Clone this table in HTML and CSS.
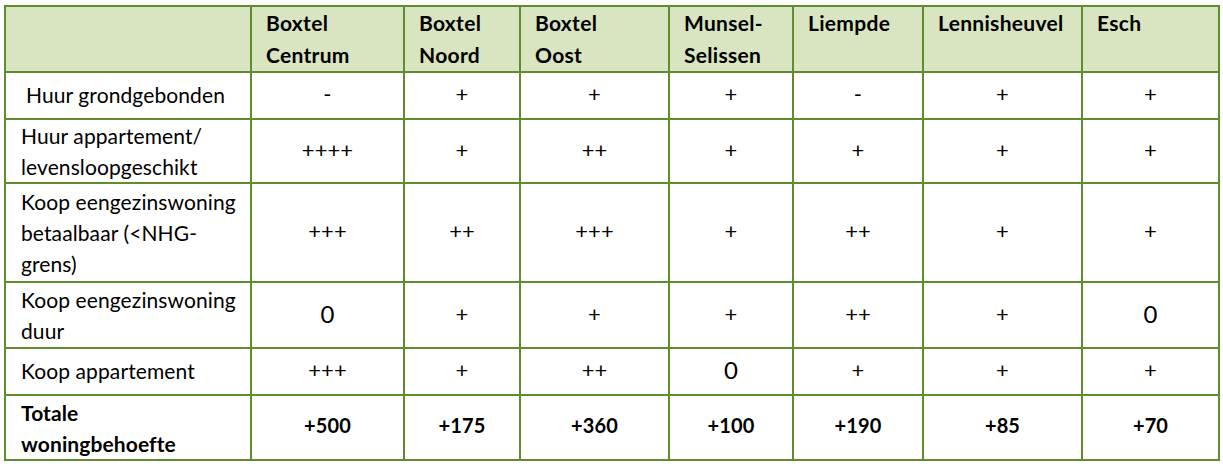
FILE: index.html
```html
<!DOCTYPE html>
<html lang="nl">
<head>
<meta charset="utf-8">
<title>Woningbehoefte</title>
<link rel="stylesheet" href="styles.css">
</head>
<body>
<table class="grid">
  <colgroup>
    <col class="c0"><col class="c1"><col class="c2"><col class="c3"><col class="c4"><col class="c5"><col class="c6"><col class="c7">
  </colgroup>
  <thead>
    <tr class="r-head">
      <th></th>
      <th>Boxtel<br>Centrum</th>
      <th>Boxtel<br>Noord</th>
      <th>Boxtel<br>Oost</th>
      <th>Munsel-<br>Selissen</th>
      <th>Liempde</th>
      <th>Lennisheuvel</th>
      <th>Esch</th>
    </tr>
  </thead>
  <tbody>
    <tr class="r-short">
      <td class="label single indent">Huur grondgebonden</td>
      <td>-</td><td>+</td><td>+</td><td>+</td><td>-</td><td>+</td><td>+</td>
    </tr>
    <tr class="r-two">
      <td class="label">Huur appartement/<br>levensloopgeschikt</td>
      <td>++++</td><td>+</td><td>++</td><td>+</td><td>+</td><td>+</td><td>+</td>
    </tr>
    <tr class="r-three">
      <td class="label">Koop eengezinswoning<br>betaalbaar (&lt;NHG-<br>grens)</td>
      <td>+++</td><td>++</td><td>+++</td><td>+</td><td>++</td><td>+</td><td>+</td>
    </tr>
    <tr class="r-tall">
      <td class="label">Koop eengezinswoning<br>duur</td>
      <td class="big">0</td><td>+</td><td>+</td><td>+</td><td>++</td><td>+</td><td class="big">0</td>
    </tr>
    <tr class="r-short">
      <td class="label single">Koop appartement</td>
      <td>+++</td><td>+</td><td>++</td><td class="big">0</td><td>+</td><td>+</td><td>+</td>
    </tr>
    <tr class="r-total">
      <td class="label">Totale<br>woningbehoefte</td>
      <td>+500</td><td>+175</td><td>+360</td><td>+100</td><td>+190</td><td>+85</td><td>+70</td>
    </tr>
  </tbody>
</table>
</body>
</html>
```
FILE: styles.css
```css
html, body {
  margin: 0;
  padding: 0;
  background: #ffffff;
}

body {
  font-family: Lato, "Liberation Sans", sans-serif;
  font-size: 21px;
  letter-spacing: 0.1px;
  color: #000000;
}

.grid {
  margin: 5px 0 0 4px;
  border-collapse: separate;
  border-spacing: 0;
  table-layout: fixed;
  width: 1216px;
  border-left: 2px solid #5f8c2d;
  border-top: 2px solid #5f8c2d;
}

.c0 { width: 246px; }
.c1 { width: 153px; }
.c2 { width: 116px; }
.c3 { width: 149px; }
.c4 { width: 124px; }
.c5 { width: 130px; }
.c6 { width: 159px; }
.c7 { width: 137px; }

.grid th,
.grid td {
  border-right: 2px solid #5f8c2d;
  border-bottom: 2px solid #5f8c2d;
  padding: 0;
  line-height: 31.5px;
  box-sizing: border-box;
}

.grid th {
  background: #d8e5c0;
  text-align: left;
  vertical-align: top;
  font-weight: bold;
  padding-left: 14px;
  letter-spacing: 0.3px;
  white-space: nowrap;
}

.grid td {
  text-align: center;
  vertical-align: middle;
  padding-bottom: 3px;
  font-size: 22px;
}

.grid td.label {
  text-align: left;
  padding-left: 15px;
  padding-bottom: 0;
  line-height: 31px;
  font-size: 21px;
  white-space: nowrap;
}

.grid td.label.single {
  padding-bottom: 3px;
}

.grid td.indent {
  padding-left: 20px;
}

.grid td.big {
  font-size: 24px;
}

.r-head { height: 66px; }
.r-short { height: 47px; }
.r-two { height: 64px; }
.r-three { height: 99px; }
.r-tall { height: 66px; }
.r-total { height: 65px; }

.r-total td {
  font-weight: bold;
  font-size: 20px;
}

.r-total td.label {
  font-size: 21px;
}
```
